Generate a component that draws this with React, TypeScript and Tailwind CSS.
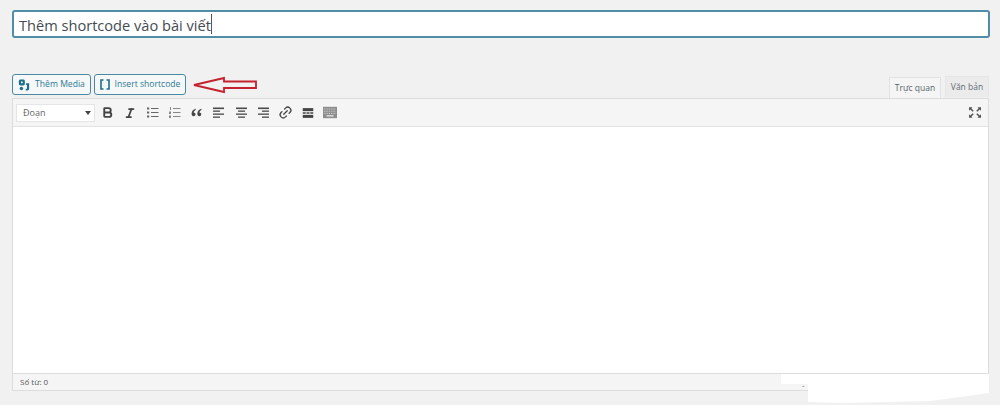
import { Bold, Italic, Link2 } from "lucide-react";

const font = "font-['Open_Sans','Noto_Sans',sans-serif]";

function Lines({ rows }: { rows: [number, number, number][] }) {
  return (
    <svg width="15" height="15" viewBox="0 0 15 15" fill="#4a4a4a">
      {rows.map(([x, y, w], i) => (
        <rect key={i} x={x} y={y} width={w} height={i === 0 ? 1.6 : 1.3} />
      ))}
    </svg>
  );
}

function BulletList() {
  return (
    <svg width="15" height="15" viewBox="0 0 15 15" fill="#666">
      <rect x="2" y="2.500" width="2.200" height="2" />
      <rect x="2" y="6.500" width="2.200" height="2" />
      <rect x="2" y="10.500" width="2.200" height="2" />
      <rect x="6" y="3" width="7.500" height="1" />
      <rect x="6" y="7" width="7.500" height="1" />
      <rect x="6" y="11" width="7.500" height="1" />
    </svg>
  );
}

function NumberList() {
  return (
    <svg width="15" height="15" viewBox="0 0 15 15" fill="#888">
      <rect x="3" y="2" width="1" height="3" />
      <rect x="2" y="6.500" width="2" height="2.500" />
      <rect x="2" y="10.500" width="2" height="2.500" />
      <rect x="6" y="3" width="7.500" height="1" />
      <rect x="6" y="7" width="7.500" height="1" />
      <rect x="6" y="11" width="7.500" height="1" />
    </svg>
  );
}

function Divider() {
  return (
    <svg width="12" height="12" viewBox="0 0 16 16" fill="#444">
      <rect x="1" y="1.500" width="14" height="4" />
      <rect x="1" y="7" width="4" height="2" />
      <rect x="6" y="7" width="4" height="2" />
      <rect x="11" y="7" width="4" height="2" />
      <rect x="1" y="10.500" width="14" height="4" />
    </svg>
  );
}

function Keyboard() {
  return (
    <svg width="14" height="13" viewBox="0 0 16 14">
      <rect x="0" y="0.500" width="16" height="13" fill="#8d8d8d" />
      <path d="M1 3h14M1 5.500h14M1 8h14" stroke="#e4e4e4" strokeWidth="1" strokeDasharray="1 1" />
      <rect x="4" y="10" width="8" height="1.600" fill="#e0e0e0" />
    </svg>
  );
}

function Quote() {
  return (
    <svg width="11" height="9" viewBox="0 0 13 11" fill="#444">
      <path d="M5.500 1C2.500 2 .5 4 .5 7c0 2 1 3 2.500 3s2.300-1 2.300-2.300S4.400 5.500 3 5.500c.2-1.200 1.200-2.300 2.500-3zM12.500 1c-3 1-5 3-5 6 0 2 1 3 2.500 3s2.300-1 2.300-2.300-.9-2.200-2.300-2.200c.2-1.200 1.200-2.300 2.500-3z" />
    </svg>
  );
}

function Fullscreen() {
  return (
    <svg width="12" height="11" viewBox="0 0 14 12" fill="#555">
      <path d="M0 0h4L2.900 1.200 5.500 4 4.300 5 1.500 2.400 0 4zM14 0v4l-1.500-1.600L9.700 5 8.500 4l2.600-2.800L10 0zM0 12V8l1.500 1.600L4.300 7l1.200 1-2.600 2.800L4 12zM14 12h-4l1.100-1.200L8.500 8l1.200-1 2.800 2.600L14 8z" />
    </svg>
  );
}

function MediaIcon() {
  return (
    <svg width="12" height="12" viewBox="0 0 14 14" fill="#1b6f8e">
      <path d="M1 2.500C1 1.200 2 .5 3 .5h3c1.200 0 2 .8 2 2v3c0 1.100-.8 2-2 2H3c-1.100 0-2-.9-2-2zm2.500.5v2h2V3z" fillRule="evenodd" />
      <circle cx="4" cy="11" r="2" />
      <path d="M9.500 5H13v6.500c0 1.200-1 2-2.200 2H9v-2h1.500V7H9.500z" />
    </svg>
  );
}

function BracketIcon() {
  return (
    <svg width="10" height="11" viewBox="0 0 10 11" fill="none" stroke="#1b6f8e" strokeWidth="1.600">
      <path d="M3.500 1H1v9h2.500M6.500 1H9v9H6.500" />
    </svg>
  );
}

function RedArrow() {
  return (
    <svg width="68" height="20" viewBox="0 0 68 20" fill="none">
      <path d="M2 10 L32 3 V6.500 H64 V13 H32 V17 Z" stroke="#c4222e" strokeWidth="1.800" />
    </svg>
  );
}

const alignLeft: [number, number, number][] = [
  [2, 2.500, 11],
  [2, 5.500, 7],
  [2, 8.500, 11],
  [2, 11.500, 7],
];
const alignCenter: [number, number, number][] = [
  [2, 2.500, 11],
  [4, 5.500, 7],
  [2, 8.500, 11],
  [4, 11.500, 7],
];
const alignRight: [number, number, number][] = [
  [2, 2.500, 11],
  [6, 5.500, 7],
  [2, 8.500, 11],
  [6, 11.500, 7],
];

export default function App() {
  return (
    <div className={`relative w-[1000px] h-[405px] overflow-hidden bg-[#f1f1f1] pt-[10px] pl-[12px] pr-[11px] ${font}`}>
      <div className="h-[28px] -mr-px rounded-[3px] border-2 border-[#4f8ea6] bg-white pl-[5px] pt-[2px] flex items-center text-[#444b52] text-[14.600px] leading-none">
        Thêm shortcode vào bài viết
        <span className="inline-block w-px h-[20px] -mt-[2px] bg-[#555]" />
      </div>

      <div className="mt-[36px] h-[25px] flex items-start justify-between">
        <div className="flex items-center gap-[3px] text-[8.600px] text-[#2c7a96] whitespace-nowrap">
          <button className="h-[21px] w-[79px] rounded-[3px] border border-[#4a8aa1] bg-[#f6f7f7] flex items-center justify-center gap-[5px]">
            <MediaIcon />
            Thêm Media
          </button>
          <button className="h-[21px] w-[92px] rounded-[3px] border border-[#4a8aa1] bg-[#f6f7f7] flex items-center justify-center gap-[5px]">
            <BracketIcon />
            Insert shortcode
          </button>
          <span className="ml-[3px]">
            <RedArrow />
          </span>
        </div>
        <div className="flex items-end gap-[4px] h-[24px] pt-[3px] -mb-px text-[8.500px]">
          <div className="h-[21px] w-[52px] flex items-center justify-center border border-[#e2e2e2] border-b-0 bg-[#f5f5f5] text-[#5b6269]">
            Trực quan
          </div>
          <div className="h-[21px] w-[44px] mb-px flex items-center justify-center border border-[#e6e6e6] border-b-0 bg-[#ebebeb] text-[#646c74]">
            Văn bản
          </div>
        </div>
      </div>

      <div className="h-[293px] flex flex-col border border-[#dcdcdc] bg-white -mt-px">
        <div className="h-[28px] shrink-0 flex items-center pl-[3px] pr-[7px] bg-[#f5f5f5] border-b border-[#e2e2e2]">
          <div className="h-[18px] w-[79px] bg-white border border-[#e5e5e5] flex items-center justify-between pl-[6px] pr-[3px] text-[9px] text-[#666]">
            Đoạn
            <span className="w-0 h-0 border-x-[3px] border-x-transparent border-t-[4px] border-t-[#444]" />
          </div>
          <div className="ml-[5px] flex items-center gap-[7.300px] [&>*]:shrink-0 [&>*]:w-[15px] [&>*]:flex [&>*]:justify-center">
            <span><Bold className="w-[13px] h-[13px] text-[#444]" strokeWidth={3.500} /></span>
            <span><Italic className="w-[12px] h-[12px] text-[#444]" strokeWidth={3.500} /></span>
            <span><BulletList /></span>
            <span><NumberList /></span>
            <span><Quote /></span>
            <span><Lines rows={alignLeft} /></span>
            <span><Lines rows={alignCenter} /></span>
            <span><Lines rows={alignRight} /></span>
            <span><Link2 className="w-[15px] h-[15px] text-[#444] -rotate-45" strokeWidth={2} /></span>
            <span><Divider /></span>
            <span><Keyboard /></span>
          </div>
          <span className="ml-auto flex">
            <Fullscreen />
          </span>
        </div>
        <div className="flex-1" />
        <div className="h-[17px] shrink-0 flex items-center pl-[7px] bg-[#f5f5f5] border-t border-[#dcdcdc] text-[8px] text-[#555]">
          Số từ: 0
        </div>
      </div>

      {/* white patch painted over the corner of the screenshot */}
      <svg className="absolute left-[781px] top-[374px]" width="210" height="31" viewBox="0 0 210 31" fill="#fff">
        <path d="M0 0H208V19L150 27 62 29 27 28V10H0Z" />
      </svg>
      <span className="absolute left-[802px] top-[381px] text-[8px] leading-none text-[#666]">-</span>
    </div>
  );
}
